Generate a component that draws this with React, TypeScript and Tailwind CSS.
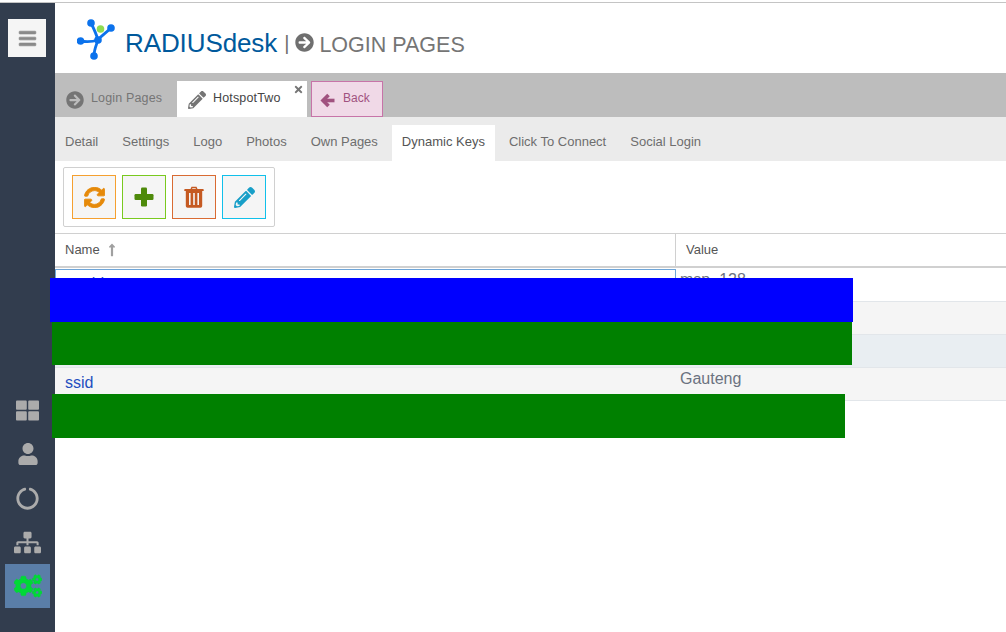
import { FaArrowCircleRight, FaBars, FaCircleNotch, FaCogs, FaPencilAlt, FaSitemap, FaSyncAlt, FaThLarge, FaTimes, FaUser, FaLongArrowAltUp } from "react-icons/fa";

const innerTabs = ["Detail", "Settings", "Logo", "Photos", "Own Pages", "Dynamic Keys", "Click To Connect", "Social Login"];

const rows = [
  { name: "nasid", value: "msp_128", bg: "bg-white" },
  { name: "", value: "", bg: "bg-[#f5f5f5]" },
  { name: "", value: "", bg: "bg-[#e9eef2]" },
  { name: "ssid", value: "Gauteng", bg: "bg-[#f5f5f5]" },
];

function Logo() {
  return (
    <svg width="40" height="42" viewBox="0 0 40 42" className="shrink-0">
      <g stroke="#0b72ec" strokeWidth="2.8" fill="none">
        <path d="M14 5 C17 11 19 15 21 22" />
        <path d="M34 10 C29 15 25 17 21 22" />
        <path d="M3 23 C9 24 15 24 21 22" />
        <path d="M17 38 C17 32 19 28 21 22" />
      </g>
      <g fill="#0b72ec">
        <circle cx="14" cy="5" r="3.8" />
        <circle cx="34" cy="10" r="3.8" />
        <circle cx="3.5" cy="23" r="3.8" />
        <circle cx="17" cy="38" r="3.8" />
        <circle cx="21" cy="22" r="3.8" />
      </g>
      <circle cx="23.5" cy="11" r="3.8" fill="#8fdc52" />
    </svg>
  );
}

function PlusIcon() {
  return (
    <svg width="20" height="20" viewBox="0 0 20 20" fill="currentColor">
      <rect x="7" y="0.5" width="6" height="19" rx="1.2" />
      <rect x="0.5" y="7" width="19" height="6" rx="1.2" />
    </svg>
  );
}

function TrashIcon() {
  return (
    <svg width="20" height="22" viewBox="0 0 20 22" fill="currentColor">
      <path fillRule="evenodd" d="M6.5 3 L7.5 0.8 H12.5 L13.5 3 H19 Q19.7 3 19.7 3.7 V5 H18.2 V20 Q18.2 21.8 16.4 21.8 H3.6 Q1.8 21.8 1.8 20 V5 H0.3 V3.7 Q0.3 3 1 3 Z M8.5 2.2 L8 3 H12 L11.5 2.2 Z M5 7 V19 H6.6 V7 Z M9.2 7 V19 H10.8 V7 Z M13.4 7 V19 H15 V7 Z" />
    </svg>
  );
}

function BackArrow() {
  return (
    <svg width="15" height="15" viewBox="0 0 15 15" fill="none" stroke="currentColor" strokeWidth="3.6" className="mr-[8px] mt-[2px]">
      <path d="M8.5 2 L3 7.5 L8.5 13" />
      <path d="M3.5 7.5 H14.5" />
    </svg>
  );
}

function Sidebar() {
  return (
    <div className="w-[55px] shrink-0 bg-[#323d4e] flex flex-col">
      <button className="mt-4 ml-2 w-[38px] h-[38px] bg-[#f5f5f5] flex items-center justify-center text-[#8a8a8a]">
        <FaBars size={19} strokeWidth={20} />
      </button>
      <div className="mt-auto mb-6 ml-[5px] w-[45px] flex flex-col text-[#ababab]">
        <div className="h-11 flex items-center justify-center"><FaThLarge size={23} /></div>
        <div className="h-11 flex items-center justify-center"><FaUser size={22} /></div>
        <div className="h-11 flex items-center justify-center"><FaCircleNotch size={23} /></div>
        <div className="h-11 flex items-center justify-center"><FaSitemap size={27} /></div>
        <div className="h-11 flex items-center justify-center bg-[#5a7ea8] text-[#00d936]"><FaCogs size={28} strokeWidth={12} /></div>
      </div>
    </div>
  );
}

function ToolButton({ border, color, children }: { border: string; color: string; children: React.ReactNode }) {
  return (
    <button className={`w-11 h-11 border bg-[#f5f5f5] flex items-center justify-center ${border} ${color}`}>
      {children}
    </button>
  );
}

export default function App() {
  return (
    <div className="relative h-[632px] w-[1006px] overflow-hidden bg-white pt-[2px] font-['Liberation_Sans',sans-serif]">
      <div className="flex h-full border-t border-[#c4c4c4]">
        <Sidebar />
        <div className="flex-1 min-w-0 flex flex-col">
          <div className="h-[70px] flex items-center pl-[22px] pt-px">
            <Logo />
            <span className="ml-[8px] text-[26px] text-[#00599c] leading-none tracking-[-0.1px] mt-2">RADIUSdesk</span>
            <span className="ml-[7px] text-[20px] text-[#6f6f6f] leading-none mt-[9px]">|</span>
            <FaArrowCircleRight size={19} className="ml-[6px] text-[#6f6f6f] mt-[7px]" />
            <span className="ml-[5px] text-[21.5px] text-[#757575] leading-[22px] mt-[12px]">LOGIN PAGES</span>
          </div>

          <div className="h-11 bg-[#bdbdbd] flex items-end pl-[11px] text-[12.5px]">
            <div className="w-[111px] h-9 flex items-center text-[#757575]">
              <FaArrowCircleRight size={18} className="text-[#757575] mr-[7px] mt-[2px]" />
              <span className="tracking-[0.15px] mb-[2px]">Login Pages</span>
            </div>
            <div className="relative w-[130px] h-9 bg-white flex items-center pl-[11px] text-[#444]">
              <FaPencilAlt size={18} className="text-[#757575] mr-[7px] mt-[2px]" />
              <span className="tracking-[0.15px] mb-[2px]">HotspotTwo</span>
              <FaTimes size={11} className="absolute right-[3px] top-[3px] text-[#757575]" />
            </div>
            <div className="ml-1 w-[72px] h-9 bg-[#f0d9e7] border border-[#c774a8] flex items-center pl-[8px] text-[#a0527f]">
              <BackArrow />
              <span className="text-[12px] mb-[2px]">Back</span>
            </div>
          </div>

          <div className="h-11 bg-[#ebebeb] flex items-end text-[13px] text-[#6e6e6e]">
            {innerTabs.map((tab) => (
              <div
                key={tab}
                className={`h-9 pb-[2px] flex items-center px-[10px] mr-[4px] ${tab === "Dynamic Keys" ? "bg-white text-[#555]" : ""}`}
              >
                {tab}
              </div>
            ))}
          </div>

          <div className="h-[72px] pt-[6px] pl-2">
            <div className="w-[212px] h-[60px] border border-[#d0d0d0] rounded-[2px] flex items-center gap-[6px] pl-2">
              <ToolButton border="border-[#f5a030]" color="text-[#e68a0a]"><FaSyncAlt size={21} strokeWidth={22} /></ToolButton>
              <ToolButton border="border-[#7ac91f]" color="text-[#4e8a0a]"><PlusIcon /></ToolButton>
              <ToolButton border="border-[#d96b33]" color="text-[#c55a22]"><TrashIcon /></ToolButton>
              <ToolButton border="border-[#11c0ea]" color="text-[#189fc8]"><FaPencilAlt size={21} /></ToolButton>
            </div>
          </div>

          <div className="h-[35px] mb-px border-t border-[#d0d0d0] border-b-2 flex text-[13px] text-[#555]">
            <div className="w-[621px] border-r border-[#d0d0d0] flex items-center pl-[10px]">
              Name
              <FaLongArrowAltUp size={14} className="ml-[5px] text-[#a0a0a0]" />
            </div>
            <div className="flex items-center pl-[10px]">Value</div>
          </div>

          {rows.map((row, i) => (
            <div key={i} className={`h-[33px] flex text-[16px] border-b border-[#e2e6ea] ${row.bg}`}>
              <div className={`w-[621px] pl-[10px] text-[#1f4fbf] ${i === 0 ? "border border-[#6ea5d8] pt-[2px]" : "pt-[3px]"}`}>{row.name}</div>
              <div className="pl-[4px] -mt-px text-[#6b7280]">{row.value}</div>
            </div>
          ))}
          <div className="h-[33px] shrink-0" />
        </div>
      </div>

      <div className="absolute left-[50px] top-[278px] w-[803px] h-11 bg-[#0000ff]" />
      <div className="absolute left-[52px] top-[322px] w-[800px] h-[43px] bg-[#008000]" />
      <div className="absolute left-[52px] top-[394px] w-[793px] h-11 bg-[#008000]" />
    </div>
  );
}
